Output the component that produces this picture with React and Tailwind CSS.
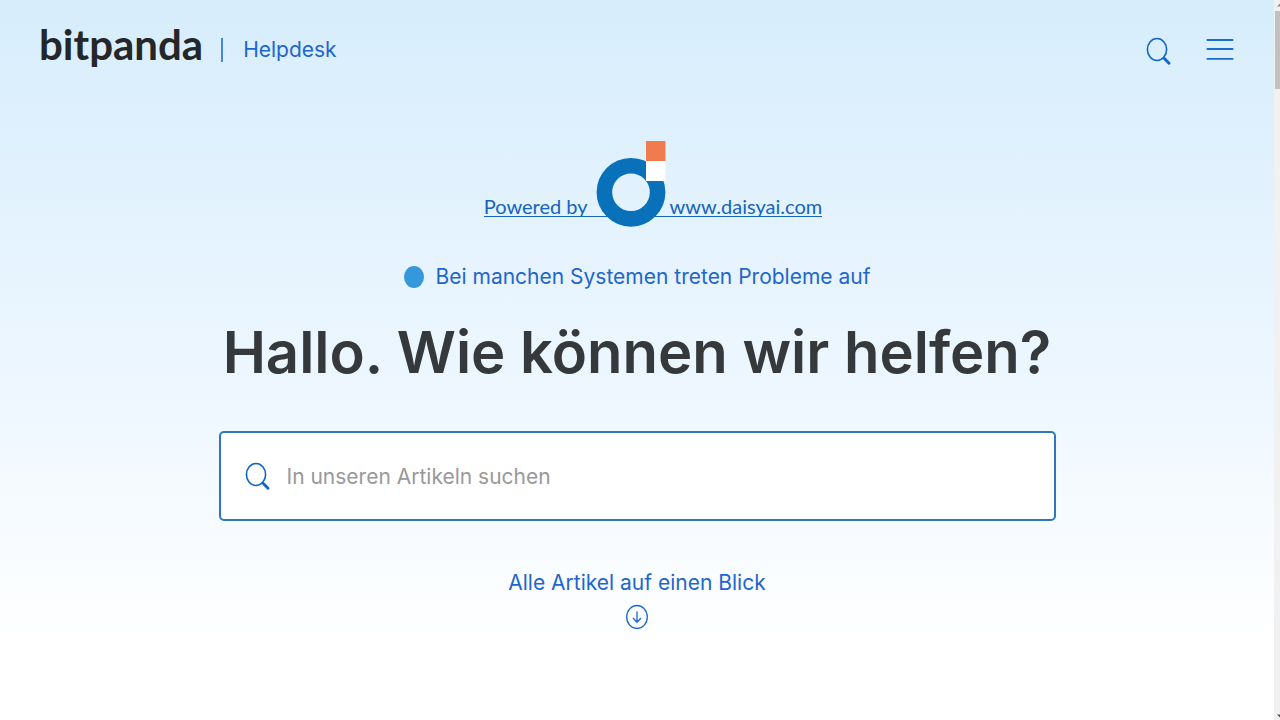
import React, { useState } from "react";

function SearchIcon() {
  return (
    <svg width="26" height="28" viewBox="0 0 26 28" fill="none" stroke="#0f66c8" aria-hidden="true">
      <ellipse cx="11" cy="12.5" rx="9.6" ry="11" strokeWidth="1.6" />
      <path d="M17.3 20.3l1.6 1.8" strokeWidth="1.8" />
      <path d="M18.6 21.7l4.4 4.6" strokeWidth="2.8" strokeLinecap="round" />
    </svg>
  );
}

function MenuIcon() {
  return (
    <svg width="28" height="28" viewBox="0 0 28 28" fill="none" stroke="#1a6ccc" strokeWidth="1.8" aria-hidden="true">
      <path d="M.7 3h26.6M.7 12h26.6M.7 21.8h26.6" />
    </svg>
  );
}

function DaisyLogo() {
  return (
    <svg width="70" height="86" viewBox="0 0 70 86" aria-hidden="true">
      <circle cx="35" cy="51.3" r="26.6" fill="none" stroke="#0871b9" strokeWidth="15.6" />
      <path d="M50 20h19.5v20H50z" fill="#fff" />
      <path d="M50 0h19.5v20H50z" fill="#f07b4f" />
    </svg>
  );
}

function ArrowDownIcon() {
  return (
    <svg width="24" height="26" viewBox="0 0 24 26" fill="none" stroke="#1a66cc" strokeWidth="1.3" aria-hidden="true">
      <ellipse cx="12" cy="13" rx="10.3" ry="11.5" />
      <path d="M12 7.5v10.5M8 14l4 4.2 4-4.2" />
    </svg>
  );
}

function Header() {
  return (
    <header className="flex h-24 items-start justify-between pl-[39px] pr-[40px]">
      <div className="flex items-start pt-5">
        <a href="#home" className="font-['Lato',sans-serif] text-[42px] font-bold leading-[48px] text-[#242628]">
          bitpanda
        </a>
        <span className="ml-[18px] mt-[18px] h-6 w-0.5 bg-[#4389d6]" />
        <a href="#helpdesk" className="ml-5 mt-4 text-[21px] leading-7 text-[#1f66cc]">
          Helpdesk
        </a>
      </div>
      <div className="flex items-center gap-[34px] pt-[37px]">
        <button type="button" aria-label="Suche">
          <SearchIcon />
        </button>
        <button type="button" aria-label="Menü">
          <MenuIcon />
        </button>
      </div>
    </header>
  );
}

function SearchBox() {
  const [query, setQuery] = useState("");

  return (
    <form
      className="mt-[43px] flex h-[90px] w-full max-w-[837px] items-center gap-4 rounded-[5px] border-2 border-[#2e76c0] bg-white px-6"
      onSubmit={(e) => e.preventDefault()}
    >
      <label htmlFor="search" aria-label="Suche">
        <SearchIcon />
      </label>
      <input
        id="search"
        type="text"
        value={query}
        onChange={(e) => setQuery(e.target.value)}
        placeholder="In unseren Artikeln suchen"
        className="h-full flex-1 bg-transparent text-[21px] text-[#36393b] outline-none placeholder:text-[#999]"
      />
    </form>
  );
}

export default function App() {
  return (
    <div className="flex min-h-screen font-['Inter',sans-serif]">
      <div className="flex-1 bg-linear-to-b from-[#d7edfc] via-[#eef7ff] via-55% to-white to-90%">
        <Header />
        <main className="flex flex-col items-center px-6 pt-[45px]">
          <a
            href="https://www.daisyai.com"
            className="ml-8 flex h-[76px] items-end border-b border-[#1565c0] font-['Lato',sans-serif] text-xl leading-5 text-[#1565c0]"
          >
            <span>Powered by</span>
            <span className="-mb-[11px] ml-2 mr-1">
              <DaisyLogo />
            </span>
            <span>www.daisyai.com</span>
          </a>
          <a href="#status" className="mt-[46px] flex items-center gap-3 text-[21px] leading-7 text-[#1f66cc]">
            <span className="h-[22px] w-5 rounded-[50%] bg-[#3498db]" />
            Bei manchen Systemen treten Probleme auf
          </a>
          <h1 className="mt-[25px] text-[58px] font-semibold leading-[72px] text-[#36393b]">
            Hallo. Wie können wir helfen?
          </h1>
          <SearchBox />
          <a href="#articles" className="mt-12 flex flex-col items-center gap-[7px] text-[21px] leading-7 text-[#1f66cc]">
            Alle Artikel auf einen Blick
            <ArrowDownIcon />
          </a>
        </main>
      </div>
      <div className="flex w-[6px] flex-col items-end justify-between bg-[#f1f1f1]" aria-hidden="true">
        <div className="w-[5px]">
          <svg width="5" height="11" viewBox="0 0 5 11" fill="#8a8a8a">
            <path d="M2 6.5L5 3.5v3z" />
          </svg>
          <div className="h-[78px] bg-[#c1c1c1]" />
        </div>
        <svg width="5" height="8" viewBox="0 0 5 8" fill="#505050">
          <path d="M2 2.5h3v3z" />
        </svg>
      </div>
    </div>
  );
}
